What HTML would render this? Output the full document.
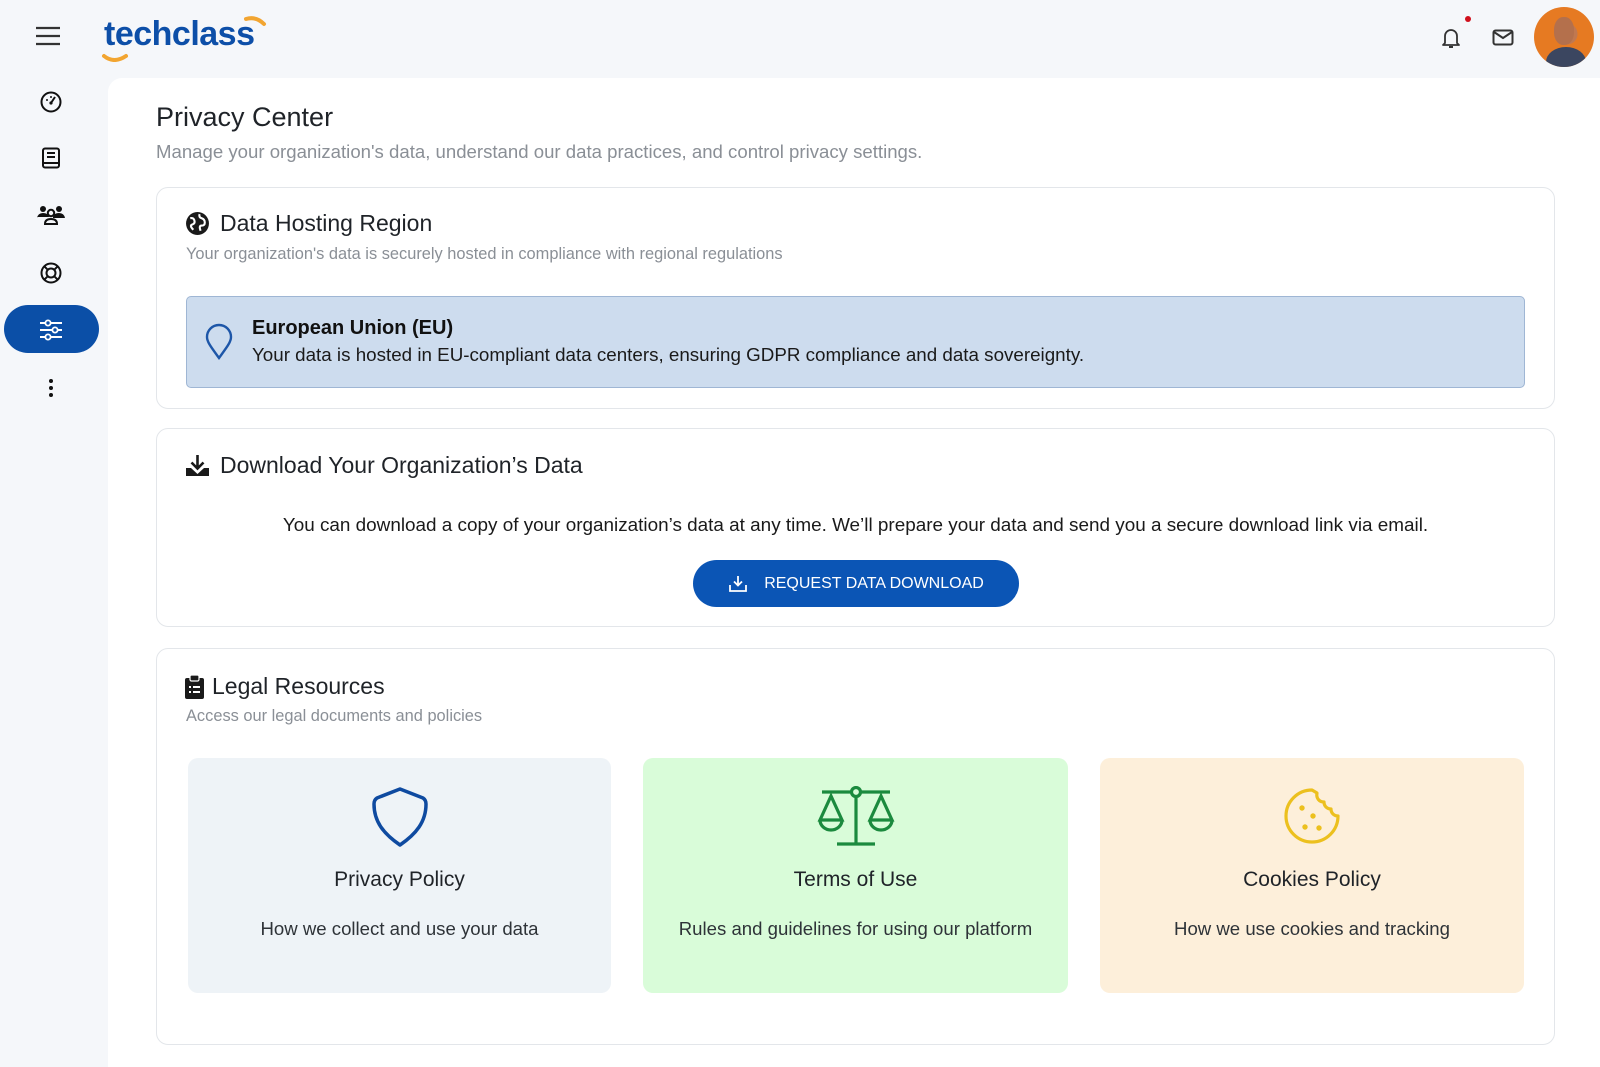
<!DOCTYPE html>
<html><head><meta charset="utf-8"><style>
*{box-sizing:border-box;margin:0;padding:0}
body{width:1600px;height:1067px;overflow:hidden;background:#f5f7fa;font-family:"Liberation Sans",Arial,sans-serif;color:#1f2328;position:relative}
.abs{position:absolute}
.main{position:absolute;left:108px;top:78px;width:1492px;height:989px;background:#fff;border-top-left-radius:14px}
.card{position:absolute;left:156px;width:1399px;background:#fff;border:1px solid #e3e6ea;border-radius:12px}
.h2{position:absolute;font-size:23px;color:#1f2328;display:flex;align-items:center;gap:10px}
.sub{position:absolute;font-size:16.4px;color:#8a8f96}
.lc{position:absolute;top:758px;height:235px;border-radius:10px;text-align:center}
.lc .t{position:absolute;top:110px;left:0;right:0;font-size:21px;color:#1f2328}
.lc .d{position:absolute;top:160px;left:0;right:0;font-size:18.6px;color:#2e3338}
.lc svg{position:absolute;left:50%;top:28px;transform:translateX(-50%)}
</style></head><body>
<svg class="abs" style="left:34px;top:25px" width="28" height="22" viewBox="0 0 28 22"><path d="M2 3h24M2 11h24M2 19h24" stroke="#333" stroke-width="2.2"/></svg>
<div class="abs" style="left:104px;top:15px;font-size:34px;font-weight:bold;color:#0d4fa8;letter-spacing:-0.5px">techclass</div>
<svg class="abs" style="left:100px;top:14px" width="170" height="48" viewBox="0 0 170 48"><path d="M4 42q10 8 22 0" stroke="#f2a531" stroke-width="4" fill="none" stroke-linecap="round"/><path d="M146 5q10 -3 18 5" stroke="#f2a531" stroke-width="4" fill="none" stroke-linecap="round"/></svg>
<svg class="abs" style="left:1440px;top:26px" width="22" height="24" viewBox="0 0 22 24"><path d="M5 17V10a6 6 0 0 1 12 0v7l2 2H3z" fill="none" stroke="#333" stroke-width="1.8" stroke-linejoin="round"/><path d="M9 21h4" stroke="#333" stroke-width="2"/></svg>
<div class="abs" style="left:1465px;top:16px;width:6px;height:6px;border-radius:50%;background:#d0101c"></div>
<svg class="abs" style="left:1492px;top:29px" width="22" height="17" viewBox="0 0 22 17"><rect x="1.5" y="1.5" width="19" height="14" rx="2" fill="none" stroke="#333" stroke-width="2"/><path d="M2 3l9 6 9-6" fill="none" stroke="#333" stroke-width="2"/></svg>
<div class="abs" style="left:1534px;top:7px;width:60px;height:60px;border-radius:50%;background:radial-gradient(circle at 55% 45%,#c07850 0 22%,#e67a22 23% 100%);overflow:hidden"><div style="position:absolute;left:12px;top:40px;width:40px;height:30px;border-radius:50% 50% 0 0;background:#3b4660"></div><div style="position:absolute;left:20px;top:10px;width:20px;height:28px;border-radius:45%;background:#b4704c"></div></div>
<svg class="abs" style="left:40px;top:91px" width="22" height="22" viewBox="0 0 22 22"><circle cx="11" cy="11" r="9.5" fill="none" stroke="#111" stroke-width="2"/><path d="M11 12l4-6" stroke="#111" stroke-width="2"/><circle cx="11" cy="12" r="1.6" fill="#111"/><circle cx="7" cy="9" r="1" fill="#111"/><circle cx="11" cy="6" r="1" fill="#111"/></svg>
<svg class="abs" style="left:41px;top:147px" width="20" height="22" viewBox="0 0 20 22"><rect x="2" y="1.5" width="16" height="19" rx="2" fill="none" stroke="#111" stroke-width="2"/><path d="M6 6h8M6 10h8M2 16h16" stroke="#111" stroke-width="2"/></svg>
<svg class="abs" style="left:37px;top:204px" width="28" height="22" viewBox="0 0 28 22"><circle cx="6" cy="5" r="3" fill="#111"/><circle cx="22" cy="5" r="3" fill="#111"/><circle cx="14" cy="9" r="3.2" fill="none" stroke="#111" stroke-width="2"/><path d="M0 14q1-5 6-5t6 4H0zM16 13q1-4 6-4t6 5H16z" fill="#111"/><path d="M8 20q0-5 6-5t6 5z" fill="none" stroke="#111" stroke-width="2"/></svg>
<svg class="abs" style="left:40px;top:262px" width="22" height="22" viewBox="0 0 22 22"><circle cx="11" cy="11" r="9.5" fill="none" stroke="#111" stroke-width="2"/><circle cx="11" cy="11" r="4.5" fill="none" stroke="#111" stroke-width="2"/><path d="M4.3 4.3l3.5 3.5M17.7 4.3l-3.5 3.5M4.3 17.7l3.5-3.5M17.7 17.7l-3.5-3.5" stroke="#111" stroke-width="2"/></svg>
<div class="abs" style="left:4px;top:305px;width:95px;height:48px;border-radius:24px;background:#0b4fa7"></div>
<svg class="abs" style="left:39px;top:319px" width="24" height="22" viewBox="0 0 24 22"><path d="M1 4h22M1 11h22M1 18h22" stroke="#fff" stroke-width="2"/><circle cx="9" cy="4" r="2.6" fill="#0b4fa7" stroke="#fff" stroke-width="1.8"/><circle cx="16" cy="11" r="2.6" fill="#0b4fa7" stroke="#fff" stroke-width="1.8"/><circle cx="9" cy="18" r="2.6" fill="#0b4fa7" stroke="#fff" stroke-width="1.8"/></svg>
<svg class="abs" style="left:48px;top:378px" width="6" height="20" viewBox="0 0 6 20"><circle cx="3" cy="3" r="2" fill="#111"/><circle cx="3" cy="10" r="2" fill="#111"/><circle cx="3" cy="17" r="2" fill="#111"/></svg>

<div class="main"></div>
<div class="abs" style="left:156px;top:102px;font-size:27px;color:#1f2328">Privacy Center</div>
<div class="abs" style="left:156px;top:141px;font-size:18.6px;color:#8a8f96">Manage your organization's data, understand our data practices, and control privacy settings.</div>

<div class="card" style="top:187px;height:222px"></div>
<div class="h2" style="left:185px;top:210px"><svg width="25" height="25" viewBox="0 0 24 24"><circle cx="12" cy="12" r="11" fill="#1a1a1a"/><path d="M5 7q3-1 4 2t-2 4 1 5M14 3q-1 3 2 4t3 4-3 3-1 5" fill="none" stroke="#fff" stroke-width="2"/></svg>Data Hosting Region</div>
<div class="sub" style="left:186px;top:245px">Your organization's data is securely hosted in compliance with regional regulations</div>
<div class="abs" style="left:186px;top:296px;width:1339px;height:92px;background:#cddcee;border:1px solid #9fb6d4;border-radius:5px"></div>
<svg class="abs" style="left:205px;top:323px" width="28" height="38" viewBox="0 0 28 38"><path d="M14 35C6 24 2 19 2 14a12 12 0 0 1 24 0c0 5-4 10-12 21z" fill="none" stroke="#1d56a8" stroke-width="2.4"/></svg>
<div class="abs" style="left:252px;top:317px;font-size:20px;font-weight:bold;color:#111">European Union (EU)</div>
<div class="abs" style="left:252px;top:344px;font-size:18.8px;color:#1a1a1a">Your data is hosted in EU-compliant data centers, ensuring GDPR compliance and data sovereignty.</div>

<div class="card" style="top:428px;height:199px"></div>
<div class="h2" style="left:185px;top:452px"><svg width="25" height="24" viewBox="0 0 25 24"><path d="M12.5 1v13M6.5 8.5l6 6 6-6" fill="none" stroke="#1a1a1a" stroke-width="2.6"/><path d="M1 14v8h23v-8h-5l-6.5 6L6 14z" fill="#1a1a1a"/></svg>Download Your Organization’s Data</div>
<div class="abs" style="left:156px;width:1399px;top:515px;text-align:center;font-size:18.9px;color:#1a1a1a">You can download a copy of your organization’s data at any time. We’ll prepare your data and send you a secure download link via email.</div>
<div class="abs" style="left:693px;top:560px;width:326px;height:47px;border-radius:24px;background:#0b55b5;color:#fff;font-size:16px;display:flex;align-items:center;justify-content:center;gap:16px"><svg width="20" height="18" viewBox="0 0 20 18"><path d="M10 1v9M6 6.5l4 4 4-4" fill="none" stroke="#fff" stroke-width="1.8"/><path d="M2 10v6h16v-6" fill="none" stroke="#fff" stroke-width="1.8"/></svg>REQUEST DATA DOWNLOAD</div>

<div class="card" style="top:648px;height:397px"></div>
<div class="h2" style="left:185px;top:673px;gap:8px"><svg width="19" height="24" viewBox="0 0 19 24"><rect x="0" y="3" width="19" height="21" rx="2" fill="#1a1a1a"/><rect x="5" y="0" width="9" height="6" rx="1.5" fill="#1a1a1a" stroke="#fff" stroke-width="1.2"/><path d="M4 12h2M8 12h7M4 17h2M8 17h7" stroke="#fff" stroke-width="2"/></svg>Legal Resources</div>
<div class="sub" style="left:186px;top:707px">Access our legal documents and policies</div>

<div class="lc" style="left:188px;width:423px;background:#eef3f7">
<svg width="58" height="62" viewBox="0 0 58 62"><path d="M29 3L52 12q3 2 3 6c0 18-10 30-26 41C13 48 3 36 3 18q0-4 3-6z" fill="none" stroke="#0e4aa0" stroke-width="3.5" stroke-linejoin="round"/></svg>
<div class="t">Privacy Policy</div><div class="d">How we collect and use your data</div></div>
<div class="lc" style="left:643px;width:425px;background:#d9fcd9">
<svg width="78" height="62" viewBox="0 0 78 62"><g fill="none" stroke="#1b8a3e" stroke-width="3.2"><path d="M5 6h68M39 12v46M20 58h38"/><circle cx="39" cy="6" r="4.5" fill="#d9fcd9"/><path d="M14 10L3 34h22zM64 10L53 34h22z"/><path d="M3 34a11 10 0 0 0 22 0M53 34a11 10 0 0 0 22 0"/></g></svg>
<div class="t">Terms of Use</div><div class="d">Rules and guidelines for using our platform</div></div>
<div class="lc" style="left:1100px;width:424px;background:#fdefda">
<svg width="60" height="60" viewBox="0 0 60 60"><path d="M30 4a26 26 0 1 0 26 26c-4 0-7-3-7-7-4 0-7-3-7-7-5 0-8-4-7-9z" fill="none" stroke="#ecc01e" stroke-width="3.2" stroke-linejoin="round"/><g fill="#ecc01e"><circle cx="20" cy="22" r="2.7"/><circle cx="31" cy="30" r="2.7"/><circle cx="23" cy="41" r="2.7"/><circle cx="37" cy="42" r="2.7"/></g></svg>
<div class="t">Cookies Policy</div><div class="d">How we use cookies and tracking</div></div>
</body></html>
